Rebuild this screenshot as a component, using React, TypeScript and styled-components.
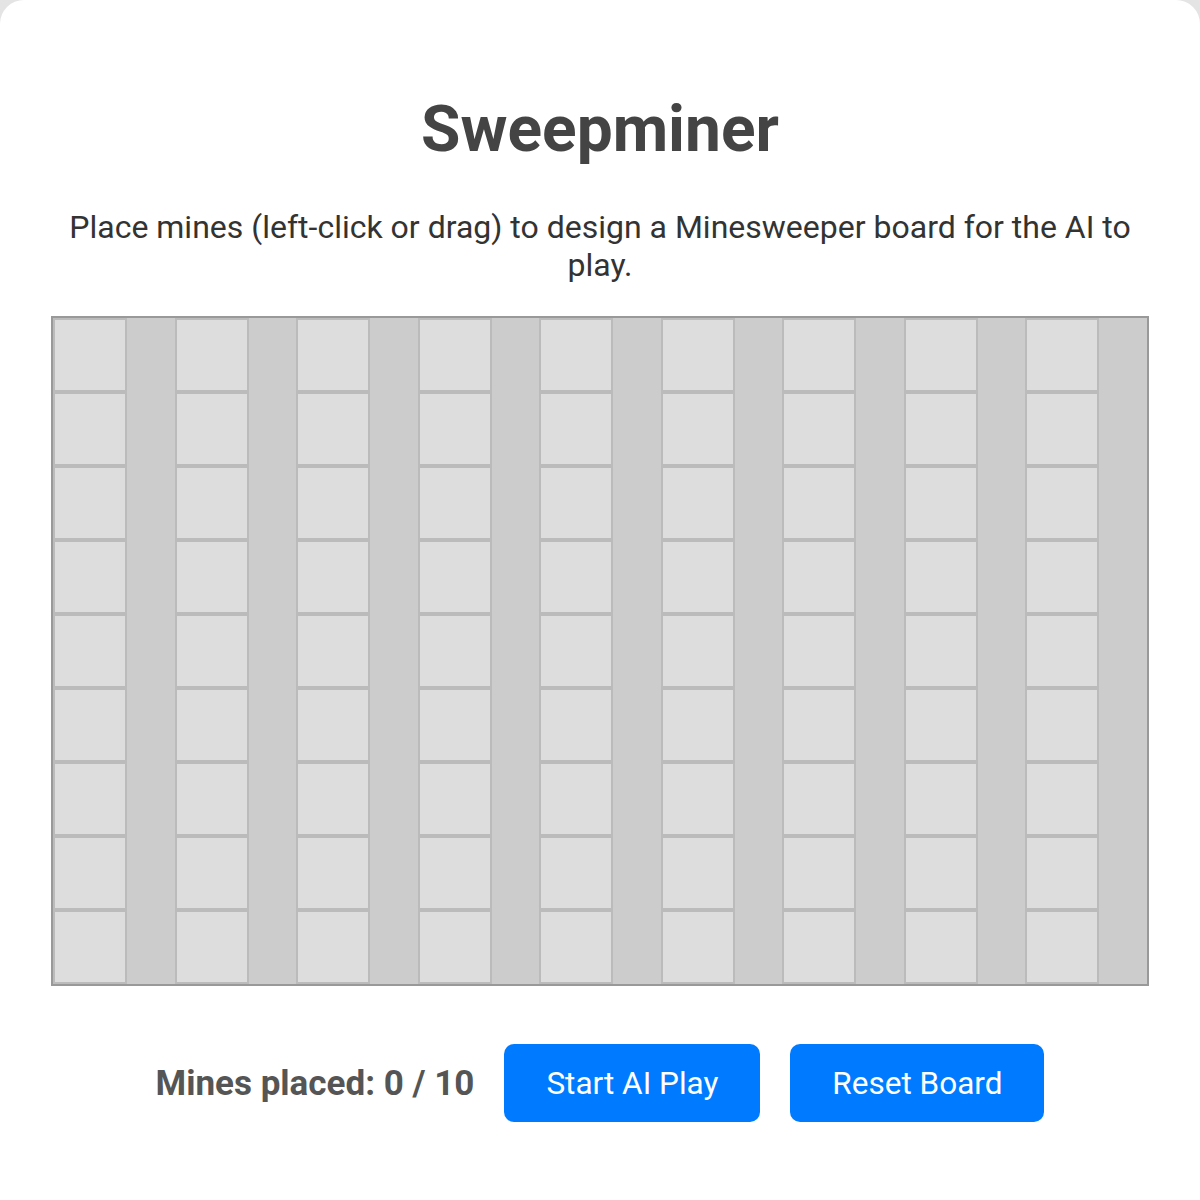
import React from "react";
import styled, { createGlobalStyle } from "styled-components";

const Global = createGlobalStyle`
  html, body { margin: 0; padding: 0; background: #e4e4e4; }
  body { font-family: Roboto, "Noto Sans", "Liberation Sans", sans-serif; }
  * { box-sizing: border-box; }
`;

const Card = styled.div`
  background: #ffffff;
  border-radius: 24px 24px 0 0;
  width: 1200px;
  min-height: 1200px;
  padding: 92px 51px 60px;
  display: flex;
  flex-direction: column;
  align-items: center;
`;

const Title = styled.h1`
  margin: 0;
  font-size: 64px;
  line-height: 76px;
  font-weight: 700;
  color: #444444;
`;

const Subtitle = styled.p`
  margin: 40px 0 0;
  font-size: 32px;
  line-height: 38px;
  color: #333333;
  text-align: center;
`;

const Board = styled.div`
  margin-top: 32px;
  width: 1098px;
  display: grid;
  grid-template-columns: repeat(9, 1fr);
  border: 2px solid #999999;
  background: #cccccc;
`;

const Cell = styled.div`
  width: 74px;
  height: 74px;
  border: 2px solid #bbbbbb;
  background: #dddddd;
`;

const Controls = styled.div`
  margin-top: 58px;
  display: flex;
  align-items: center;
  gap: 30px;
`;

const Counter = styled.span`
  font-size: 35px;
  font-weight: 700;
  color: #555555;
`;

const Button = styled.button`
  font-family: inherit;
  height: 78px;
  padding: 0 42px;
  font-size: 31.5px;
  color: #ffffff;
  background: #007bff;
  border: none;
  border-radius: 10px;
  cursor: pointer;
`;

export default function App() {
  const cells = Array.from({ length: 81 }, (_, i) => i);
  return (
    <>
      <Global />
      <Card>
        <Title>Sweepminer</Title>
        <Subtitle>
          Place mines (left-click or drag) to design a Minesweeper board for the AI to play.
        </Subtitle>
        <Board>
          {cells.map((i) => (
            <Cell key={i} />
          ))}
        </Board>
        <Controls>
          <Counter>Mines placed: 0 / 10</Counter>
          <Button>Start AI Play</Button>
          <Button>Reset Board</Button>
        </Controls>
      </Card>
    </>
  );
}
